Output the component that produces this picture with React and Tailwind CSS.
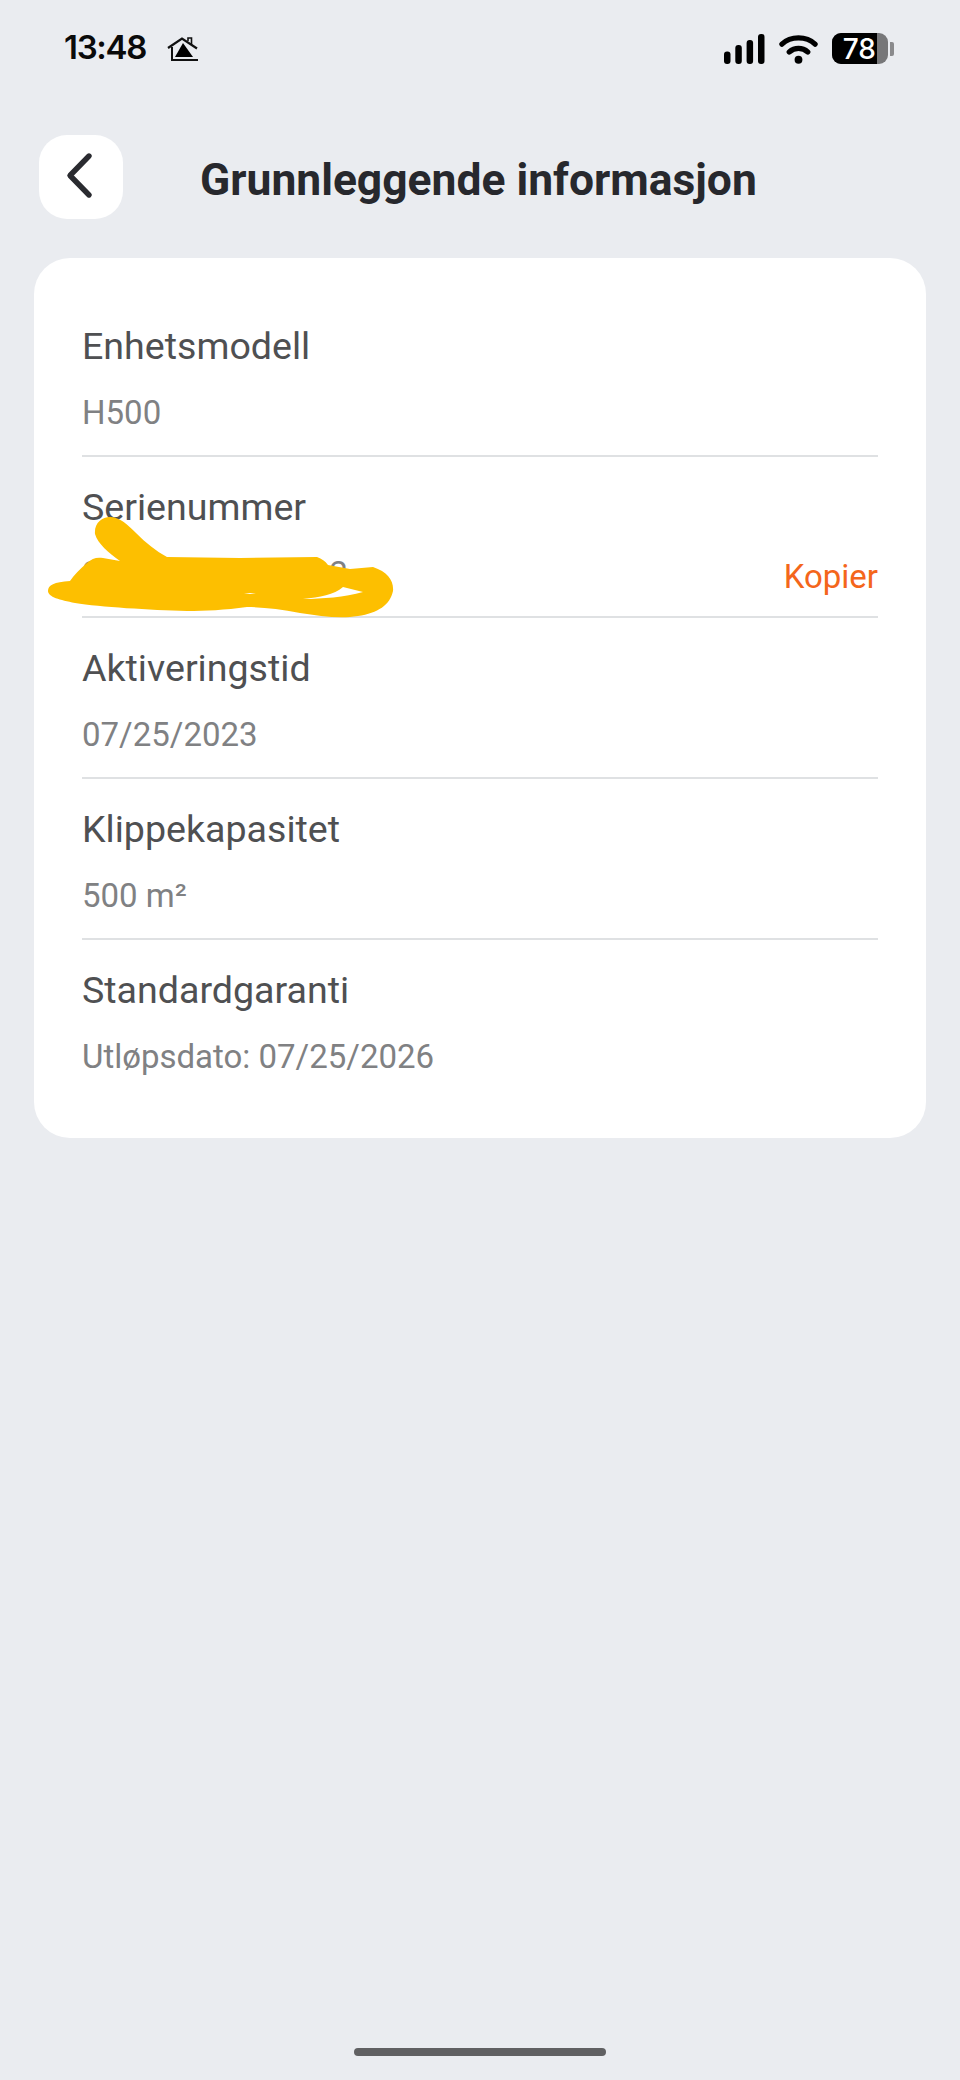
const rows = [
  { label: "Enhetsmodell", value: "H500" },
  { label: "Serienummer", value: "S", tail: "12", copy: true },
  { label: "Aktiveringstid", value: "07/25/2023" },
  { label: "Klippekapasitet", value: "500 m²" },
  { label: "Standardgaranti", value: "Utløpsdato: 07/25/2026" },
];

function HomeIcon() {
  return (
    <svg width="34" height="26" viewBox="166 36 34 26" className="ml-[20px] mt-[4px]">
      <path d="M168 48 L182 38.5 L197 48.5" fill="none" stroke="#111" strokeWidth="2.2" />
      <path d="M188 41 V38 H191.5 V45" fill="none" stroke="#111" strokeWidth="1.6" />
      <path d="M172 47 V60 H198" fill="none" stroke="#111" strokeWidth="2" />
      <path d="M183 43 L193 57 H175 Z" fill="#000" />
    </svg>
  );
}

function Signal() {
  return (
    <svg width="41" height="30" viewBox="0 0 41 30">
      <rect x="0" y="17.5" width="6.5" height="12.5" rx="3" fill="#000" />
      <rect x="11.3" y="11" width="6.5" height="19" rx="3" fill="#000" />
      <rect x="22.6" y="6" width="6.5" height="24" rx="3" fill="#000" />
      <rect x="34" y="0" width="6.5" height="30" rx="3" fill="#000" />
    </svg>
  );
}

function Wifi() {
  return (
    <svg width="39" height="30" viewBox="0 0 40 30">
      <path d="M3 10 C12 1.5 28 1.5 37 10" fill="none" stroke="#000" strokeWidth="5.4" strokeLinecap="round" />
      <path d="M10.5 18 C16 13.2 24 13.2 29.5 18" fill="none" stroke="#000" strokeWidth="5.4" strokeLinecap="round" />
      <circle cx="20" cy="26" r="4" fill="#000" />
    </svg>
  );
}

function Battery() {
  return (
    <div className="flex items-center gap-[2px]">
      <div className="flex h-[31px] w-[56px] overflow-hidden rounded-[9px] bg-[#777779]">
        <div className="flex w-[45px] items-center justify-end bg-black pr-[1px] text-[28px] font-medium leading-none text-white">
          78
        </div>
      </div>
      <div className="h-[14px] w-[4px] rounded-r-[2px] bg-[#8a8a8c]" />
    </div>
  );
}

function Row({ label, value, tail, copy, last }) {
  return (
    <div className={last ? "pt-[28px] pb-[22px]" : "border-b-2 border-[#dfe1e3] pt-[28px] pb-[22px]"}>
      <div className="text-[37.6px] leading-[44px] text-[#4f5052]">{label}</div>
      <div className="mt-[25px] flex items-center justify-between text-[33px] leading-[40px] text-[#808183]">
        <span>
          {value}
          {tail && <span className="ml-[209px]">{tail}</span>}
        </span>
        {copy && <span className="translate-y-[3px] text-[#f4661b]">Kopier</span>}
      </div>
    </div>
  );
}

export default function App() {
  return (
    <div className="relative flex h-[2080px] w-[960px] flex-col overflow-hidden bg-[#eaecf0] font-['Roboto',sans-serif]">
      <div className="flex items-start justify-between pl-[64px] pr-[66px] pt-[32px] font-['Inter',sans-serif]">
        <div className="flex items-start">
          <span className="text-[33px] font-semibold leading-[30px] tracking-[-1.3px] text-[#0a0a0a]">13:48</span>
          <HomeIcon />
        </div>
        <div className="flex items-center gap-[14px] pt-[1px]">
          <Signal />
          <Wifi />
          <Battery />
        </div>
      </div>

      <div className="mt-[71px] flex items-center pl-[39px]">
        <div className="flex h-[84px] w-[84px] items-center justify-center rounded-[28px] bg-white">
          <svg width="32" height="48" viewBox="0 0 32 48" className="-ml-[5px] -mt-[3px]">
            <path d="M26 4 L7 23.5 L26 43" fill="none" stroke="#2a2b30" strokeWidth="5.4" strokeLinecap="round" strokeLinejoin="round" />
          </svg>
        </div>
        <h1 className="ml-[77px] mt-[5px] text-[44.4px] font-bold leading-[52px] text-[#27282d]">Grunnleggende informasjon</h1>
      </div>

      <div className="relative ml-[34px] mr-[34px] mt-[39px] rounded-[36px] bg-white pb-[39px] pl-[48px] pr-[48px] pt-[38px]">
        {rows.map((r, i) => (
          <Row key={r.label} {...r} last={i === rows.length - 1} />
        ))}
        <svg width="360" height="115" viewBox="40 510 360 115" className="absolute left-[6px] top-[251px]">
          <path
            d="M95 535 C94 524 102 518 110 518 C120 518 128 526 136 534 C146 544 156 552 167 558 L240 559 L317 558 C322 560 325 562 328 566 L350 570 L373 568 C388 573 394 582 393 592 C390 606 378 614 358 617 C340 620 320 617 300 614 C280 610 262 608 247 608 C225 611 205 612 187 612 C150 611 100 608 75 604 C60 601 48 598 48 592 C48 586 54 583 70 582 C74 576 80 570 87 564 C92 559 97 558 103 559 L120 562 C108 553 98 545 95 535 Z"
            fill="#fdbf00"
          />
          <path d="M343 588 L363 593 C345 598 322 600 303 600 C320 598 334 596 343 588 Z" fill="#fff" />
          <path d="M244 594 L256 594 L250 595 Z" fill="#fff" />
        </svg>
      </div>

      <div className="mt-auto mb-[24px] h-[8px] w-[252px] self-center rounded-full bg-[#606062]" />
    </div>
  );
}
